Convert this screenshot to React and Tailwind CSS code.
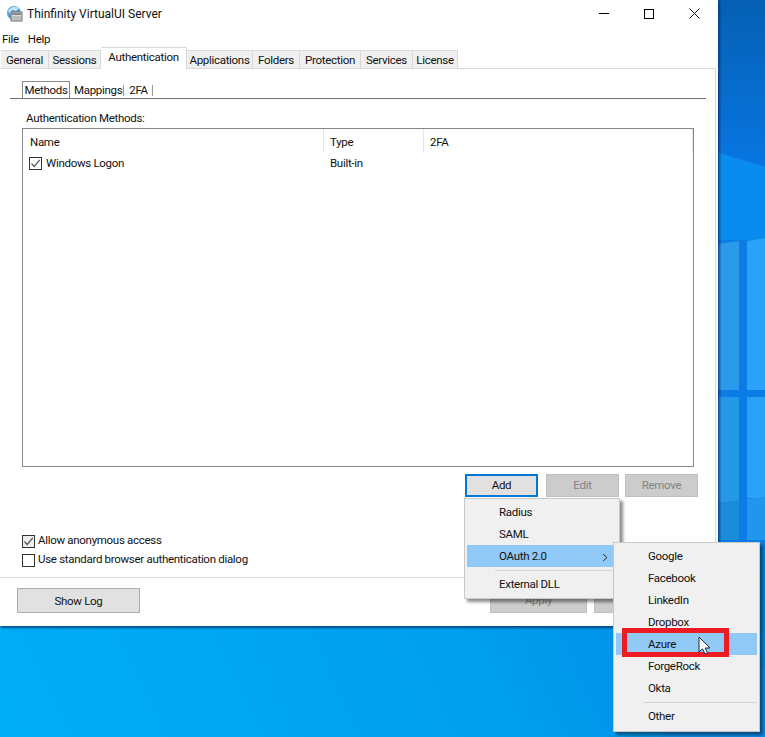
const tabs = [
  { label: 'General', width: 'w-[48px]' },
  { label: 'Sessions', width: 'w-[52px]' },
  { label: 'Authentication', width: 'w-[86px]', active: true },
  { label: 'Applications', width: 'w-[66px]' },
  { label: 'Folders', width: 'w-[47px]' },
  { label: 'Protection', width: 'w-[61px]' },
  { label: 'Services', width: 'w-[52px]' },
  { label: 'License', width: 'w-[45px]' },
];

function Wallpaper() {
  return (
    <svg className="absolute inset-0" width="765" height="737" viewBox="0 0 765 737">
      <defs>
        <linearGradient id="wall" x1="0" y1="1" x2="1" y2="0.55">
          <stop offset="0" stopColor="#00aef8" />
          <stop offset="0.55" stopColor="#009fee" />
          <stop offset="1" stopColor="#0082e0" />
        </linearGradient>
        <linearGradient id="top" x1="0" y1="0" x2="0" y2="1">
          <stop offset="0" stopColor="#0560b4" />
          <stop offset="1" stopColor="#0877e4" />
        </linearGradient>
      </defs>
      <rect width="765" height="737" fill="url(#wall)" />
      <rect x="700" width="65" height="175" fill="url(#top)" />
      <path d="M700 147 L765 167 L765 260 L700 260 Z" fill="#0a8bf0" />
      <rect x="700" y="240" width="65" height="310" fill="#0a7ce4" />
      <path d="M718 244 L739 241 L739 390 L718 390 Z" fill="#2b9aea" />
      <path d="M747 241 L765 238 L765 390 L747 390 Z" fill="#2aa2f8" />
      <path d="M718 397 L739 397 L739 502 L718 502 Z" fill="#2698e8" />
      <path d="M747 397 L765 397 L765 498 L747 498 Z" fill="#2aa2f8" />
      <path d="M718 503 L739 500 L739 540 L718 540 Z" fill="#1b8cdc" />
      <path d="M747 499 L765 497 L765 540 L747 540 Z" fill="#2096ee" />
      <rect x="718" y="0" width="3" height="550" fill="#003f80" opacity="0.25" />
      <path d="M660 737 L765 665 L765 737 Z" fill="#0a8ce6" />
    </svg>
  );
}

function AppIcon() {
  return (
    <svg width="17" height="17" viewBox="0 0 17 17">
      <circle cx="8" cy="8" r="7" fill="#4aa3dc" />
      <path d="M2 6 C5 1 9 1 13 3 L10 6 L6 5 L4 9 Z" fill="#bfe3f5" />
      <rect x="5" y="7" width="11" height="9" fill="#d8d8d8" stroke="#6f6f6f" />
      <rect x="6" y="8" width="9" height="2" fill="#8a8a8a" />
      <path d="M6 12 H15 M6 14 H15" stroke="#a0a0a0" />
    </svg>
  );
}

function Check({ checked, tone = 'bg-white' }) {
  return (
    <span className={`w-[13px] h-[13px] border border-[#333333] flex items-center justify-center shrink-0 ${tone}`}>
      {checked && (
        <svg width="11" height="11" viewBox="0 0 11 11">
          <path d="M1.5 5.5 L4.2 8.5 L9.8 1.8" fill="none" stroke="#555555" strokeWidth="1.2" />
        </svg>
      )}
    </span>
  );
}

function DisabledButton({ label, width }) {
  return (
    <button className={`h-[23px] pt-[2px] ${width} bg-[#cccccc] border border-[#bfbfbf] text-[#838383]`}>{label}</button>
  );
}

function Popup({ className, children }) {
  return (
    <div className={`absolute bg-[#f0f0f0] border border-[#c8c8c8] pt-[2px] shadow-[3px_3px_3px_rgba(0,0,0,0.45)] ${className}`}>
      {children}
    </div>
  );
}

function MenuRow({ label, active, arrow }) {
  return (
    <div className={`h-[22px] flex items-center justify-between mx-[2px] pl-[32px] pt-[2px] ${active ? 'bg-[#91c9f7]' : ''}`}>
      <span>{label}</span>
      {arrow && (
        <svg className="mr-[9px]" width="6" height="9" viewBox="0 0 6 9">
          <path d="M1 1 L5 4.5 L1 8" fill="none" stroke="#333333" />
        </svg>
      )}
    </div>
  );
}

export default function App() {
  return (
    <div className="relative w-[765px] h-[737px] overflow-hidden font-['Roboto',sans-serif] text-[11.5px] tracking-[-0.3px] text-[#111111] leading-none">
      <Wallpaper />

      <div className="relative w-[718px] h-[626px] bg-white flex flex-col shadow-[1px_2px_2px_rgba(0,40,90,0.7)]">
        <div className="h-[27px] flex items-center pl-[6px] shrink-0">
          <AppIcon />
          <span className="ml-[4px] text-[12px] tracking-normal">Thinfinity VirtualUI Server</span>
          <div className="ml-auto flex items-center mr-[18px] gap-[35px]">
            <span className="w-[10px] h-px bg-black" />
            <span className="w-[10px] h-[10px] border border-black" />
            <svg width="11" height="11" viewBox="0 0 11 11">
              <path d="M0.5 0.5 L10.5 10.5 M10.5 0.5 L0.5 10.5" stroke="#111111" />
            </svg>
          </div>
        </div>

        <div className="h-[21px] flex items-center gap-[9px] pl-[2px] pt-[4px] shrink-0">
          <span>File</span>
          <span>Help</span>
        </div>

        <div className="flex items-end h-[21px] pl-px shrink-0 relative z-10">
          {tabs.map((tab) => (
            <div
              key={tab.label}
              className={`${tab.width} flex items-center justify-center border border-l-0 border-[#d9d9d9] ${
                tab.active ? 'h-[22px] bg-white border-b-0 pb-[2px] border-l' : 'h-[19px] pt-[2px] bg-[#f0f0f0]'
              }`}
            >
              {tab.label}
            </div>
          ))}
        </div>

        <div className="flex-1 flex flex-col border-t border-r border-[#d9d9d9] mr-[2px] mt-[-1px]">
          <div className="flex-1 flex flex-col pl-[10px] pr-[9px]">
            <div className="flex items-end h-[30px] border-b border-[#6f6f6f] pl-[12px] shrink-0">
              <div className="h-[17px] w-[48px] pt-[2px] border border-b-0 border-[#8a8a8a] flex items-center justify-center">Methods</div>
              <span className="ml-[4px] pb-[2px]">Mappings</span>
              <span className="ml-px mb-[2px] w-px h-[11px] bg-[#9a9a9a]" />
              <span className="ml-[5px] pb-[2px]">2FA</span>
              <span className="ml-[4px] mb-[2px] w-px h-[11px] bg-[#9a9a9a]" />
            </div>

            <div className="pl-[16px] pt-[14px] pb-[3px] shrink-0">Authentication Methods:</div>

            <div className="ml-[12px] mr-[12px] h-[339px] border border-[#828790] shrink-0">
              <div className="flex h-[25px] items-center">
                <div className="w-[301px] pl-[7px] h-[24px] pt-[4px] flex items-center border-r border-[#e5e5e5]">Name</div>
                <div className="w-[100px] pl-[6px] h-[24px] pt-[4px] flex items-center border-r border-[#e5e5e5]">Type</div>
                <div className="flex-1 pl-[6px] h-[24px] pt-[4px] flex items-center border-r border-[#e5e5e5]">2FA</div>
              </div>
              <div className="flex items-center h-[19px]">
                <div className="w-[301px] pl-[6px] flex items-center gap-[4px]">
                  <Check checked />
                  <span className="pt-[2px]">Windows Logon</span>
                </div>
                <div className="pl-[6px] pt-[2px]">Built-in</div>
              </div>
            </div>

            <div className="flex justify-end pr-[8px] pt-[7px] shrink-0">
              <button className="h-[23px] w-[73px] pt-[2px] bg-[#e1e1e1] border-2 border-[#0078d7]">Add</button>
              <div className="ml-[8px]"><DisabledButton label="Edit" width="w-[73px]" /></div>
              <div className="ml-[6px]"><DisabledButton label="Remove" width="w-[73px]" /></div>
            </div>

            <div className="flex flex-col gap-[6px] pl-[12px] pt-[38px]">
              <label className="flex items-center gap-[3px]">
                <Check checked tone="bg-[#eeeeee]" />
                <span>Allow anonymous access</span>
              </label>
              <label className="flex items-center gap-[3px]">
                <Check />
                <span>Use standard browser authentication dialog</span>
              </label>
            </div>
          </div>
        </div>

        <div className="h-[49px] border-t border-[#d9d9d9] flex items-start pt-[10px] pl-[17px] shrink-0">
          <button className="h-[25px] w-[123px] pt-[2px] bg-[#e1e1e1] border border-[#adadad]">Show Log</button>
          <button className="ml-[350px] h-[25px] w-[97px] bg-[#cccccc] border border-[#bfbfbf] text-[#838383]">Apply</button>
          <button className="ml-[7px] h-[25px] w-[97px] bg-[#cccccc] border border-[#bfbfbf]" />
        </div>
      </div>

      <Popup className="left-[464px] top-[498px] w-[156px] h-[101px]">
        <MenuRow label="Radius" />
        <MenuRow label="SAML" />
        <MenuRow label="OAuth 2.0" active arrow />
        <div className="h-[6px] ml-[30px] mr-[2px] flex items-center">
          <span className="w-full h-px bg-[#d4d4d4]" />
        </div>
        <MenuRow label="External DLL" />
      </Popup>

      <Popup className="left-[613px] top-[542px] w-[147px] h-[190px]">
        <MenuRow label="Google" />
        <MenuRow label="Facebook" />
        <MenuRow label="LinkedIn" />
        <MenuRow label="Dropbox" />
        <MenuRow label="Azure" active />
        <MenuRow label="ForgeRock" />
        <MenuRow label="Okta" />
        <div className="h-[6px] ml-[30px] mr-[2px] flex items-center">
          <span className="w-full h-px bg-[#d4d4d4]" />
        </div>
        <MenuRow label="Other" />
      </Popup>

      <div className="absolute left-[622px] top-[628px] w-[107px] h-[29px] border-[5px] border-[#ed1c24]" />

      <svg className="absolute left-[698px] top-[636px]" width="14" height="20" viewBox="0 0 14 20">
        <path d="M1 1 L1 16 L4.5 12.8 L7 18 L9.5 17 L7.2 12 L12 12 Z" fill="white" stroke="#1a2a3a" strokeWidth="1" />
      </svg>
    </div>
  );
}
